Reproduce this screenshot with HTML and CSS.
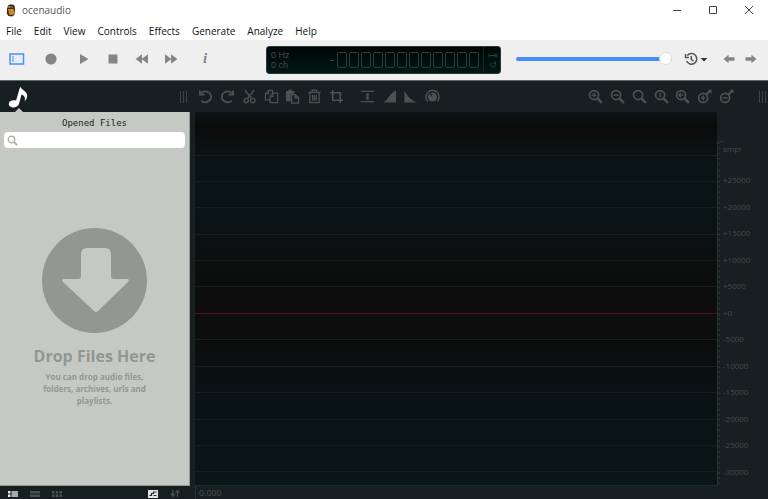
FILE: index.html
```html
<!DOCTYPE html>
<html lang="en">
<head>
<meta charset="utf-8">
<title>ocenaudio</title>
<link rel="stylesheet" href="styles.css">
</head>
<body>
<svg class="defs" aria-hidden="true">
  <defs>
    <symbol id="lens" viewBox="0 0 16 16"><circle cx="6.5" cy="6.5" r="4.8" fill="none" stroke="currentColor" stroke-width="1.8"/><path d="M10 10l4.8 4.8" fill="none" stroke="currentColor" stroke-width="2.6"/></symbol>
    <symbol id="knob" viewBox="0 0 16 16"><circle cx="6.5" cy="9.5" r="4.8" fill="none" stroke="currentColor" stroke-width="1.8"/><path d="M9.800 6.200l4-4" fill="none" stroke="currentColor" stroke-width="2.400"/><path d="M11.500.8h4v4z" fill="currentColor"/></symbol>
  </defs>
</svg>
<header class="titlebar">
  <svg class="logo" viewBox="0 0 10 13"><path d="M2 1.5L4 .5h3l1.5 1.2.6 4.3-.8 5L6 12.6 2.4 12 .8 9.5 1 5z" fill="#3b2c1c"/><path d="M2 5h5.5l1 3-1.2 2.7H3.4z" fill="#d98b1c"/><path d="M3 3h4M3.5 7.5h3" stroke="#a77c48" stroke-width="1.2"/><circle cx="3" cy="3" r=".8" fill="#d9b680"/></svg>
  <h1>ocenaudio</h1>
  <div class="window-buttons">
    <button aria-label="Minimize"><svg viewBox="0 0 10 10"><path d="M1 5.5h8"/></svg></button>
    <button aria-label="Maximize"><svg viewBox="0 0 10 10"><path d="M1.5 1.5h7v7h-7z"/></svg></button>
    <button aria-label="Close"><svg viewBox="0 0 10 10"><path d="M1 1l8 8M9 1L1 9"/></svg></button>
  </div>
</header>
<nav class="menu">
  <button>File</button><button>Edit</button><button>View</button><button>Controls</button><button>Effects</button><button>Generate</button><button>Analyze</button><button>Help</button>
</nav>
<div class="toolbar">
  <div class="transport">
    <button aria-label="Toggle side panel"><svg class="wide" viewBox="0 0 16 12"><rect x="1" y="1" width="13.5" height="10" fill="#e7effc" stroke="#4a90f8" stroke-width="1.5"/><path d="M4 3v6" stroke="#4a90f8"/></svg></button>
    <button aria-label="Record"><svg viewBox="0 0 12 12"><circle cx="6" cy="6" r="5.6"/></svg></button>
    <button aria-label="Play"><svg viewBox="0 0 12 12"><path d="M2 1l8.5 5L2 11z"/></svg></button>
    <button aria-label="Stop"><svg viewBox="0 0 12 12"><path d="M1.5 1.5h9v9h-9z"/></svg></button>
    <button aria-label="Rewind"><svg class="skip" viewBox="0 0 14 12"><path d="M.5 6L7 1.3v9.4zM6.5 6L13 1.3v9.4z"/></svg></button>
    <button aria-label="Forward"><svg class="skip" viewBox="0 0 14 12"><path d="M13.5 6L7 1.3v9.4zM7.5 6L1 1.3v9.4z"/></svg></button>
    <button class="info" aria-label="Information">i</button>
  </div>
  <div class="display">
    <div class="rate"><span>0 Hz</span><span>0 ch</span></div>
    <div class="digits" role="img" aria-label="Playback position"><b></b><i></i><i></i><i></i><i></i><i></i><i></i><i></i><i></i><i></i><i></i><i></i><i></i></div>
    <div class="modes"><svg viewBox="0 0 10 20"><path d="M1 3.5v4M1 5.5h7M6 3.5l2.3 2L6 7.500M9 3.500v4M3.500 12.500a2.600 2.600 0 1 0 3 0M7.500 11.500v2H5.500"/></svg></div>
  </div>
  <input class="volume" type="range" aria-label="Volume" min="0" max="100" value="100">
  <button class="history" aria-label="History"><svg viewBox="0 0 26 14"><path d="M3.300 3.600A5.300 5.300 0 1 1 2.600 9M1.500 2v3.500H5M7.300 4v3.500l2.200 1.700" fill="none" stroke="#555" stroke-width="1.500"/><path d="M16.500 6h7L20 9.600z" fill="#333"/></svg></button>
  <button class="arrow" aria-label="Back"><svg viewBox="0 0 12 10"><path d="M.5 5L5.500.800v2.400h6v3.600h-6v2.400z"/></svg></button>
  <button class="arrow" aria-label="Next"><svg viewBox="0 0 12 10"><path d="M11.500 5L6.500.800v2.400h-6v3.600h6v2.400z"/></svg></button>
</div>
<div class="toolstrip">
  <div class="tabs">
    <button class="tab" aria-label="Opened files"><svg viewBox="0 0 20 22"><path d="M12.200.5c.5 3 6.800 4.600 7 8.500.1 2.500-1 5-2.500 6.200.9-3.500-.2-5.800-3.200-6.700l-2.200 8.300c-.8 3.600-3.600 5-6.800 4.700-3-.3-4.300-2.400-3.600-4.400.9-2.600 4.300-3.400 7.200-2.500z" fill="#fff"/></svg></button>
    <span class="grip"></span>
  </div>
  <div class="tools edit">
    <button aria-label="Undo"><svg viewBox="0 0 16 16"><path d="M3.500 4.500C7 1 14 2.800 14 8.300c0 5.500-7.500 7.500-10.500 4.200M2 1.500v4.500h5" fill="none" stroke="currentColor" stroke-width="1.900"/></svg></button>
    <button aria-label="Redo"><svg viewBox="0 0 16 16"><path d="M12.500 4.500C9 1 2 2.800 2 8.300c0 5.500 7.500 7.500 10.500 4.200M14 1.500v4.500H9" fill="none" stroke="currentColor" stroke-width="1.900"/></svg></button>
    <button aria-label="Cut"><svg viewBox="0 0 16 16"><path d="M3 1l7.500 9.500M13 1L5.500 10.500" fill="none" stroke="currentColor" stroke-width="1.600"/><circle cx="4.500" cy="12.300" r="2.300" fill="none" stroke="currentColor" stroke-width="1.500"/><circle cx="11.500" cy="12.300" r="2.300" fill="none" stroke="currentColor" stroke-width="1.500"/></svg></button>
    <button aria-label="Copy"><svg viewBox="0 0 16 16"><path d="M6.500 11.500h-5V5l3.500-3.500h4V5M1.500 5H5V1.500M6.500 8l3-3.500h5v10h-8zM6.500 8h3V4.500" fill="none" stroke="currentColor" stroke-width="1.300"/></svg></button>
    <button aria-label="Paste"><svg viewBox="0 0 16 16"><path d="M1 2h2.500V.8h4V2H10v3H6v8H1z" fill="currentColor"/><path d="M7 6h4l3.500 3.500V15H7zM11 6v3.500h3.500" fill="none" stroke="currentColor" stroke-width="1.400"/></svg></button>
    <button aria-label="Delete"><svg viewBox="0 0 16 16"><path d="M1.500 3.500h13M5.500 3V1.200h5V3M3 4v10.500h10V4M6 6v6.500M8 6v6.500M10 6v6.500" fill="none" stroke="currentColor" stroke-width="1.400"/></svg></button>
    <button aria-label="Crop"><svg viewBox="0 0 16 16"><path d="M4 1v11h11M1 4h11v11" fill="none" stroke="currentColor" stroke-width="1.800"/></svg></button>
  </div>
  <div class="tools levels">
    <button aria-label="Normalize"><svg viewBox="0 0 16 16"><path d="M1 2.500h14M1 13.500h14M8 5v6" fill="none" stroke="currentColor" stroke-width="1.500"/><path d="M5.500 7L8 4l2.500 3zM5.500 9L8 12l2.500-3z" fill="currentColor"/></svg></button>
    <button aria-label="Fade in"><svg viewBox="0 0 16 16"><path d="M1 14.500C6 13 8 4 15 1.500v13z" fill="currentColor"/></svg></button>
    <button aria-label="Fade out"><svg viewBox="0 0 16 16"><path d="M1.500 1.500C4 7 9 12.500 15.500 14.500h-14z" fill="currentColor"/></svg></button>
    <button aria-label="Gain"><svg viewBox="0 0 16 16"><circle cx="8" cy="8.500" r="4.800" fill="currentColor"/><path d="M3 13.200a7 7 0 1 1 10 0" fill="none" stroke="currentColor" stroke-width="1.500"/><path d="M7.500 8L6 4.500" stroke="#171f20" stroke-width="1.300"/></svg></button>
  </div>
  <div class="tools zooms">
    <button aria-label="Zoom in"><svg viewBox="0 0 16 16"><use href="#lens"/><path d="M4 6.500h5M6.500 4v5" stroke="currentColor" stroke-width="1.500"/></svg></button>
    <button aria-label="Zoom out"><svg viewBox="0 0 16 16"><use href="#lens"/><path d="M4 6.500h5" stroke="currentColor" stroke-width="1.500"/></svg></button>
    <button aria-label="Zoom selection"><svg viewBox="0 0 16 16"><use href="#lens"/></svg></button>
    <button aria-label="Zoom 1:1"><svg viewBox="0 0 16 16"><use href="#lens"/><path d="M6.500 4v5" stroke="currentColor" stroke-width="1.500"/></svg></button>
    <button aria-label="Zoom all"><svg viewBox="0 0 16 16"><use href="#lens"/><path d="M4 6.500h5M6.500 4L4 6.500 6.500 9" fill="none" stroke="currentColor" stroke-width="1.300"/></svg></button>
    <button aria-label="Vertical zoom in"><svg viewBox="0 0 16 16"><use href="#knob"/><path d="M4 9.500h5M6.500 7v5" stroke="currentColor" stroke-width="1.500"/></svg></button>
    <button aria-label="Vertical zoom out"><svg viewBox="0 0 16 16"><use href="#knob"/><path d="M4 9.500h5" stroke="currentColor" stroke-width="1.500"/></svg></button>
  </div>
  <span class="grip"></span>
</div>
<main class="workspace">
  <aside class="sidebar">
    <section class="files">
      <h2>Opened Files</h2>
      <label class="search"><svg viewBox="0 0 16 16"><use href="#lens"/></svg><input type="search" aria-label="Search files"></label>
      <div class="drop">
        <svg viewBox="0 0 105 105"><circle cx="52.500" cy="52.500" r="52.500" fill="#929793"/><path d="M45 20h18q6 0 6 6v22q0 3 3 3h13q3 0 1 3L56 83q-2 2-4 0L21 54q-2-3 1-3h14q3 0 3-3V26q0-6 6-6z" fill="#c4cac3"/></svg>
        <h3>Drop Files Here</h3>
        <p>You can drop audio files, folders, archives, urls and playlists.</p>
      </div>
    </section>
    <footer class="status">
      <button aria-label="Details"><svg viewBox="0 0 10 6"><path d="M0 0h2.500v2.500H0zM0 3.500h2.500V6H0z" fill="#e8eceb"/><path d="M3.500 0H10v6H3.500z" fill="#a4abaa"/></svg></button>
      <button aria-label="List"><svg viewBox="0 0 10 6"><path d="M0 0h10v2.500H0zM0 3.500h10V6H0z"/></svg></button>
      <button aria-label="Grid"><svg viewBox="0 0 10 6"><path d="M0 0h2.500v2.500H0zM3.700 0h2.500v2.500H3.700zM7.500 0H10v2.500H7.500zM0 3.500h2.500V6H0zM3.700 3.500h2.500V6H3.700zM7.500 3.500H10V6H7.500z"/></svg></button>
      <button class="preview" aria-label="Preview"><svg viewBox="0 0 10 8"><path d="M0 0h10v8H0z" fill="#e0e5e3"/><path d="M1.500 5.500h2V3.500h2V2h3M5.500 5.500h3" fill="none" stroke="#222b2b" stroke-width="1.200"/></svg></button>
      <button aria-label="Sort"><svg viewBox="0 0 10 8"><path d="M3 0v6M1 4l2 2.500L5 4M1 3.500h3M7.500 7V1M5.500 3l2-2.500 2 2.500" fill="none" stroke="#485150" stroke-width="1.200"/></svg></button>
    </footer>
  </aside>
  <section class="editor" aria-label="Waveform">
    <div class="plot"><div class="head"></div><div></div><div></div><div></div><div></div><div></div><div class="zero"></div><div></div><div></div><div></div><div></div><div></div><div></div></div>
    <div class="ruler"><div class="unit">smpl</div><div>+25000</div><div>+20000</div><div>+15000</div><div>+10000</div><div>+5000</div><div>+0</div><div>-5000</div><div>-10000</div><div>-15000</div><div>-20000</div><div>-25000</div><div>-30000</div></div>
    <div class="timeline">0.000</div>
  </section>
</main>
</body>
</html>
```
FILE: styles.css
```css
* { box-sizing: border-box; }
body {
  margin: 0;
  height: 100vh;
  display: flex;
  flex-direction: column;
  overflow: hidden;
  background: #171f20;
  font: 10px/14px "Open Sans", "Noto Sans", sans-serif;
}
button {
  display: flex;
  align-items: center;
  justify-content: center;
  padding: 0;
  border: 0;
  background: none;
  color: inherit;
  font: inherit;
}
svg { display: block; }
h1, h2, h3, p { margin: 0; font: inherit; }
.defs { position: absolute; width: 0; height: 0; }

.titlebar {
  display: flex;
  align-items: center;
  height: 20px;
  padding: 0 1px 0 6px;
  background: #fff;
  color: #555;
}
.logo { width: 10px; height: 13px; margin-right: 6px; }
.window-buttons { display: flex; margin-left: auto; }
.window-buttons button { width: 36px; height: 18px; }
.window-buttons svg { width: 10px; height: 10px; fill: none; stroke: #444; }

.menu {
  display: flex;
  gap: 12px;
  height: 20px;
  align-items: center;
  padding: 2px 6px 0;
  background: #fff;
  color: #111;
}

.toolbar {
  display: flex;
  align-items: center;
  height: 41px;
  padding: 0 6px 3px 0;
  background: #efefef;
  border-bottom: 1px solid #5d6767;
}
.toolbar button { color: #858585; fill: #858585; }
.transport {
  display: grid;
  grid-template-columns: 34px 34px 32px 26px 32px 26px 42px;
  margin-right: 40px;
}
.transport svg { width: 12px; height: 12px; }
.transport .wide { width: 16px; }
.transport .skip { width: 14px; }
.transport .info { font: italic bold 15px/15px "Liberation Serif", serif; }
.display {
  display: flex;
  width: 235px;
  height: 28px;
  margin: 3px 15px 0 0;
  border: 1px solid #2c3838;
  border-radius: 3px;
  background: linear-gradient(#000606, #011817);
  color: #434c4a;
}
.rate {
  flex: 1;
  display: flex;
  flex-direction: column;
  justify-content: center;
  padding-left: 4px;
  font: 9px/10px "Liberation Sans", sans-serif;
}
.digits { display: flex; align-items: center; gap: 2px; padding-right: 4px; }
.digits b { width: 4px; height: 1px; margin-right: 1px; background: #39413f; }
.digits i { width: 10px; height: 16px; border: 1px solid #303a38; border-radius: 2px; }
.modes { display: flex; align-items: center; width: 17px; padding-left: 4px; border-left: 1px solid #152423; }
.modes svg { width: 10px; height: 20px; fill: none; stroke: #0d4a3b; }

.volume {
  appearance: none;
  flex: 1;
  min-width: 0;
  height: 14px;
  margin: 0 12px 0 0;
  background: none;
}
.volume::-webkit-slider-runnable-track { height: 4px; border-radius: 2px; background: #448cf8; }
.volume::-webkit-slider-thumb {
  appearance: none;
  width: 13px;
  height: 13px;
  margin-top: -5px;
  border: 1px solid #ddd;
  border-radius: 50%;
  background: #fff;
}
.history svg { width: 26px; height: 14px; }
.history { margin-right: 8px; }
.arrow { width: 22px; }
.arrow svg { width: 12px; height: 10px; }

.toolstrip {
  display: flex;
  align-items: center;
  height: 31px;
  padding-right: 2px;
  color: #4a5351;
}
.tabs {
  display: flex;
  align-items: center;
  justify-content: space-between;
  width: 190px;
  height: 31px;
  margin-right: 5px;
  padding: 0 3px 0 8px;
}
.tab { position: relative; height: 31px; }
.tab svg { width: 20px; height: 22px; }
.tab::after {
  content: "";
  position: absolute;
  left: 7px;
  bottom: 0;
  border: solid transparent;
  border-width: 0 4px 4px;
  border-bottom-color: #c4cac3;
}
.grip {
  width: 7px;
  height: 12px;
  background: repeating-linear-gradient(90deg, #3c4543 0 1px, transparent 1px 3px);
}
.tools { display: flex; }
.tools button { flex: 1; height: 29px; padding-bottom: 1px; }
.tools svg { width: 15px; height: 15px; }
.edit, .zooms { width: 152px; }
.levels { width: 86px; margin-left: 10px; }
.zooms { margin: 0 22px 0 auto; }

.workspace { flex: 1; display: flex; min-height: 0; }
.sidebar { display: flex; flex-direction: column; width: 190px; margin-right: 5px; }
.files {
  flex: 1;
  display: flex;
  flex-direction: column;
  background: #c4cac3;
  border-right: 1px solid #929b98;
  border-bottom: 1px solid #929b98;
}
.files h2 {
  padding-top: 3px;
  font: 9px/17px "DejaVu Sans Mono", monospace;
  color: #222;
  text-align: center;
}
.search {
  display: flex;
  align-items: center;
  height: 16px;
  margin: 0 4px;
  padding-left: 3px;
  border-radius: 4px;
  background: #fff;
  color: #aaa;
}
.search svg { width: 11px; height: 11px; }
.search input { flex: 1; min-width: 0; border: 0; outline: 0; background: none; font: inherit; }
.drop {
  flex: 1;
  display: flex;
  flex-direction: column;
  align-items: center;
  justify-content: center;
  padding-top: 2px;
  color: #929793;
  text-align: center;
  font-weight: bold;
}
.drop svg { width: 105px; height: 105px; }
.drop h3 { margin: 11px 0 3px; font-size: 16px; line-height: 24px; }
.drop p { width: 116px; font-size: 8px; line-height: 12px; }
.status { display: flex; align-items: center; height: 13px; padding: 3px 4px 0 2px; fill: #485150; }
.status button { width: 22px; }
.status svg { width: 10px; height: 6px; }
.preview { margin-left: auto; }
.status .preview svg, .preview + button svg { height: 8px; }

.editor {
  flex: 1;
  display: grid;
  grid-template: 1fr 13px / 1fr 51px;
  min-width: 0;
  color: #434c4a;
  font-size: 8px;
}
.plot, .ruler { display: flex; flex-direction: column; }
.plot {
  background: linear-gradient(#091414, #0b0b0a 15px, #0b1415 45px, #0a1414 100px, #0c0d0c 48%, #0c0d0c 60%, #0a1213 75%, #0b1617);
  border-bottom: 1px solid #222b2b;
}
.plot div {
  flex: 1;
  background: linear-gradient(#171e1e, #171e1e) center / 100% 1px no-repeat;
}
.plot .head { flex: 0 0 56px; background-position: 0 43px; }
.plot .zero { background-image: linear-gradient(#5a1016, #5a1016); }
.ruler div {
  flex: 1;
  display: flex;
  align-items: center;
  padding: 0 0 2px 5px;
  border-left: 1px solid #293130;
  background: linear-gradient(transparent 40%, #293130 40% 60%, transparent 60%) 0 0 / 2px 20% repeat-y;
}
.ruler .unit {
  flex: 0 0 27px;
  margin-top: 29px;
  padding-bottom: 12px;
  background:
    linear-gradient(#293130, #293130) 0 0 / 6px 1px no-repeat,
    linear-gradient(transparent 40%, #293130 40% 60%, transparent 60%) 0 0 / 2px 5px repeat-y;
}
.timeline {
  padding: 1px 0 0 3px;
  border-left: 1px solid #293130;
  font: 9px/12px "Liberation Sans", sans-serif;
}
```
